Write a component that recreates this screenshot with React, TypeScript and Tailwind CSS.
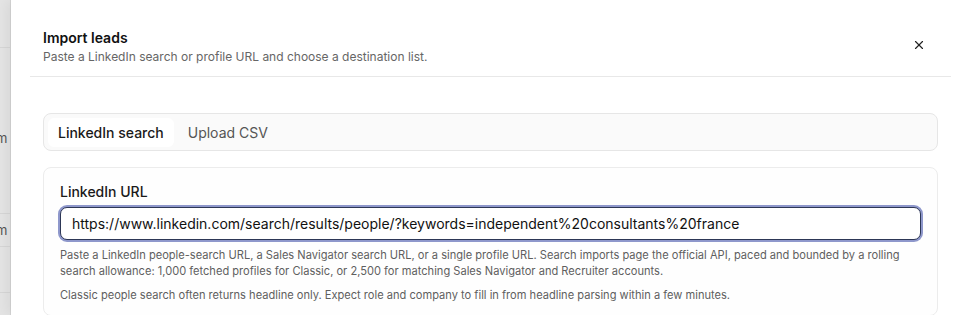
import React, { useState } from 'react';
import { X } from 'lucide-react';

const font = { fontFamily: 'Inter, "Noto Sans", sans-serif' };

function Backdrop() {
  // the page behind the sheet, dimmed and mostly covered
  return (
    <div aria-hidden className="w-[11px] shrink-0 overflow-hidden bg-[#e4e4e4] border-r border-[#d4d4d4] text-[13px] text-[#555]">
      <div className="h-[48px] border-b border-[#d6d6d6]" />
      <div className="h-[78px]" />
      <div className="h-[24px] -ml-[4px] leading-[24px]">m</div>
      <div className="h-[64px] border-b border-[#d6d6d6]" />
      <div className="h-[33px] -ml-[4px] leading-[33px] border-b border-[#d6d6d6]">m</div>
      <div className="h-[46px] border-b border-[#d6d6d6]" />
    </div>
  );
}

export default function App() {
  const [tab, setTab] = useState<'linkedin' | 'csv'>('linkedin');
  const [url, setUrl] = useState(
    'https://www.linkedin.com/search/results/people/?keywords=independent%20consultants%20france'
  );

  return (
    <div className="flex h-[315px] w-[970px] overflow-hidden bg-white" style={font}>
      <Backdrop />
      <div className="flex-1 bg-white shadow-[-4px_0_12px_rgba(0,0,0,0.06)]">
        {/* Header */}
        <div className="mx-[19px] flex items-start justify-between border-b border-[#e8e8e8] pt-[28px] pb-[11px] pl-[13px] pr-[25px]">
          <div>
            <h2 className="text-[14px] font-semibold leading-[20px] text-[#111]">Import leads</h2>
            <p className="text-[12px] leading-[17px] text-[#666]">
              Paste a LinkedIn search or profile URL and choose a destination list.
            </p>
          </div>
          <button className="mt-[10px] text-[#222]">
            <X className="h-[14px] w-[14px]" strokeWidth={2} />
          </button>
        </div>

        <div className="px-[32px] pt-[36px]">
          {/* Tabs */}
          <div className="flex h-[38px] items-center gap-[4px] rounded-[8px] border border-[#e6e6e6] bg-[#fafafa] px-[4px]">
            <button
              onClick={() => setTab('linkedin')}
              className={`h-[29px] rounded-[6px] px-[10px] text-[14px] font-medium ${
                tab === 'linkedin' ? 'bg-white text-[#1a1a1a]' : 'text-[#666]'
              }`}
            >
              LinkedIn search
            </button>
            <button
              onClick={() => setTab('csv')}
              className={`h-[29px] rounded-[6px] px-[10px] text-[14px] ${
                tab === 'csv' ? 'bg-white font-medium text-[#1a1a1a]' : 'text-[#555]'
              }`}
            >
              Upload CSV
            </button>
          </div>

          {/* LinkedIn URL card */}
          <div className="mt-[16px] rounded-[8px] border border-[#ececec] bg-[#fefefe] px-[16px] pt-[14px] pb-[12px]">
            <label className="block text-[14px] font-medium leading-[20px] text-[#1a1a1a]">LinkedIn URL</label>
            <input
              value={url}
              onChange={e => setUrl(e.target.value)}
              className="mt-[5px] h-[33px] w-full rounded-[7px] border border-[#2d3756] bg-white px-[11px] text-[14px] text-[#111] shadow-[0_0_0_2px_#8e97cb] outline-none"
            />
            <p className="mt-[7px] text-[11.1px] leading-[16px] text-[#5f5f5f]">
              Paste a LinkedIn people-search URL, a Sales Navigator search URL, or a single profile URL. Search imports page the official API, paced and bounded by a rolling search allowance: 1,000 fetched profiles for Classic, or 2,500 for matching Sales Navigator and Recruiter accounts.
            </p>
            <p className="mt-[8px] text-[11.1px] leading-[16px] text-[#5f5f5f]">
              Classic people search often returns headline only. Expect role and company to fill in from headline parsing within a few minutes.
            </p>
          </div>
        </div>
      </div>
    </div>
  );
}
